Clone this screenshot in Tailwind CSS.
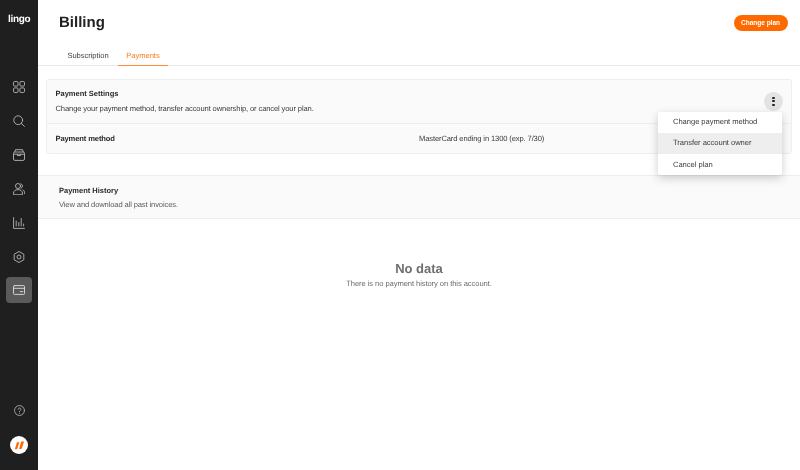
<!DOCTYPE html>
<html>
<head>
<meta charset="utf-8">
<script src="https://cdn.jsdelivr.net/npm/@tailwindcss/browser@4"></script>
</head>
<body class="font-['Liberation_Sans',sans-serif] bg-white [text-rendering:geometricPrecision]">
<div class="flex h-[470px] w-[800px] overflow-hidden">
  <aside class="w-[38px] shrink-0 bg-[#1f1f1f] flex flex-col items-center text-[#b8b8b8]">
    <div class="h-[37px] pt-[1px] flex items-center text-white text-[10px] font-bold tracking-[-0.3px] [will-change:transform]">lingo</div>
    <nav class="mt-[37px] flex flex-col items-center gap-[8px]">
      <div class="w-[26px] h-[26px] flex items-center justify-center">
        <svg class="w-[12px] h-[12px]" viewBox="0 0 12 12" fill="none" stroke="currentColor" stroke-width="0.9"><rect x=".5" y=".5" width="4.6" height="4.6" rx="1.2"/><rect x="6.9" y=".5" width="4.6" height="4.6" rx="1.2"/><rect x=".5" y="6.9" width="4.6" height="4.6" rx="1.2"/><rect x="6.9" y="6.9" width="4.6" height="4.6" rx="1.2"/></svg>
      </div>
      <div class="w-[26px] h-[26px] flex items-center justify-center">
        <svg class="w-[12px] h-[12px]" viewBox="0 0 12 12" fill="none" stroke="currentColor" stroke-width="0.9" stroke-linecap="round"><circle cx="5.2" cy="5.2" r="4.4"/><path d="M8.4 8.4 11.4 11.4"/></svg>
      </div>
      <div class="w-[26px] h-[26px] flex items-center justify-center">
        <svg class="w-[12px] h-[12px]" viewBox="0 0 12 12" fill="none" stroke="currentColor" stroke-width="0.9"><rect x=".5" y="3" width="11" height="8.4" rx="1.4"/><path d="M1.8 3 2.4.7h7.2L10.2 3M.5 5.2h11M4.4 5.2v1.3h3.2V5.2"/></svg>
      </div>
      <div class="w-[26px] h-[26px] flex items-center justify-center">
        <svg class="w-[12px] h-[12px]" viewBox="0 0 12 12" fill="none" stroke="currentColor" stroke-width="0.9" stroke-linecap="round"><circle cx="5" cy="3" r="2.5"/><path d="M.6 11.4V10c0-2 1.8-3.4 4.4-3.4S9.4 8 9.4 10v1.4zM8 .8a2.4 2.4 0 0 1 0 4.4M10 6.9c1 .5 1.6 1.5 1.6 2.8v1"/></svg>
      </div>
      <div class="w-[26px] h-[26px] flex items-center justify-center">
        <svg class="w-[12px] h-[12px]" viewBox="0 0 12 12" fill="none" stroke="currentColor" stroke-width="0.9" stroke-linecap="round"><path d="M.6.6v10.8h10.8M3.2 4v5M5.8 5.5V9M8.2 1.5V9M10.6 7v2"/></svg>
      </div>
      <div class="w-[26px] h-[26px] flex items-center justify-center">
        <svg class="w-[12px] h-[12px]" viewBox="0 0 12 12" fill="none" stroke="currentColor" stroke-width="0.9" stroke-linejoin="round"><path d="M6 .5 10.8 3.2v5.6L6 11.5 1.2 8.8V3.2z"/><circle cx="6" cy="6" r="2"/></svg>
      </div>
      <div class="w-[26px] h-[26px] rounded-[4px] bg-[#5a5a5a] flex items-center justify-center text-[#e0e0e0] -mt-[1px]">
        <svg class="w-[12px] h-[12px]" viewBox="0 0 12 12" fill="none" stroke="currentColor" stroke-width="0.9" stroke-linecap="round"><rect x=".5" y="1.6" width="11" height="8.8" rx="1"/><path d="M.5 4.3h11M7.2 7.6h2.6"/></svg>
      </div>
    </nav>
    <div class="mt-auto flex flex-col items-center pb-[16px] gap-[20px]">
      <svg class="w-[11px] h-[11px]" viewBox="0 0 12 12" fill="none" stroke="currentColor" stroke-width="0.9" stroke-linecap="round"><circle cx="6" cy="6" r="5.4"/><path d="M4.5 4.7a1.5 1.5 0 1 1 2.3 1.3c-.5.3-.8.6-.8 1.1M6 8.9v.1"/></svg>
      <div class="w-[18px] h-[18px] rounded-full bg-white flex items-center justify-center">
        <svg class="w-[11px] h-[9px]" viewBox="0 0 11 9" fill="#ff6a00"><path d="M3 1.2h2.4L3.4 7.6a1 1 0 0 1-1 .7H.8zM7.2.6h2.9L7.9 7.2a1 1 0 0 1-1 .7H5.1z"/></svg>
      </div>
    </div>
  </aside>
  <main class="flex-1 min-w-0 flex flex-col [will-change:transform]">
    <header class="h-[46px] pl-[21px] pr-[12.5px] flex items-center justify-between">
      <h1 class="text-[15px] font-bold text-[#222] mt-[1px]">Billing</h1>
      <button class="h-[15.5px] w-[54px] rounded-full bg-[#ff6a00] text-white text-[6.5px] font-bold flex items-center justify-center">Change plan</button>
    </header>
    <div class="h-[20px] pl-[21px] flex border-b border-[#e9e9e9] text-[7.6px] tracking-[-0.05px]">
      <div class="w-[60px] text-[#444] h-[20px] flex items-center justify-center -ml-[1px]">Subscription</div>
      <div class="w-[50px] text-[#ff7a1a] h-[20px] border-b-[1.5px] border-[#ff8a3c] flex items-center justify-center">Payments</div>
    </div>
    <section class="mx-[8px] mt-[12.5px] relative border border-[#eeeeee] rounded-[3px] bg-[#fafafa] text-[#333]">
      <div class="h-[44.5px] pl-[8.5px] pr-[8px] flex items-center justify-between border-b border-[#eeeeee]">
        <div class="pt-[1px]">
          <h2 class="text-[7.5px] font-bold text-[#2a2a2a] leading-[10px]">Payment Settings</h2>
          <p class="text-[7.6px] tracking-[-0.13px] mt-[5px] text-[#3c3c3c] leading-[10px]">Change your payment method, transfer account ownership, or cancel your plan.</p>
        </div>
        <div class="w-[19px] h-[19px] rounded-full bg-[#e3e3e3] flex flex-col items-center justify-center gap-[1.2px]">
          <span class="w-[2.2px] h-[2.2px] rounded-full bg-[#222]"></span>
          <span class="w-[2.2px] h-[2.2px] rounded-full bg-[#222]"></span>
          <span class="w-[2.2px] h-[2.2px] rounded-full bg-[#222]"></span>
        </div>
      </div>
      <div class="h-[29px] pl-[8.5px] flex items-center text-[7.6px] tracking-[-0.13px]">
        <div class="w-[363.5px] font-bold text-[#2a2a2a]">Payment method</div>
        <div class="text-[#3c3c3c]">MasterCard ending in 1300 (exp. 7/30)</div>
      </div>
      <div class="absolute left-[611px] top-[32px] w-[124px] bg-white rounded-[2px] shadow-[0_3px_10px_rgba(0,0,0,0.2)] text-[7.6px] tracking-[-0.05px] text-[#3c3c3c]">
        <div class="h-[21px] px-[15px] flex items-center">Change payment method</div>
        <div class="h-[21px] px-[15px] flex items-center bg-[#eeeeee]">Transfer account owner</div>
        <div class="h-[21.5px] px-[15px] flex items-center">Cancel plan</div>
      </div>
    </section>
    <section class="mt-[21px] h-[44px] pt-[1px] pl-[21px] border-y border-[#eeeeee] bg-[#fafafa] flex flex-col justify-center">
      <h2 class="text-[7.5px] font-bold text-[#2a2a2a] leading-[10px]">Payment History</h2>
      <p class="text-[7.6px] tracking-[-0.13px] mt-[4px] text-[#5c5c5c] leading-[10px]">View and download all past invoices.</p>
    </section>
    <div class="mt-[42px] flex flex-col items-center">
      <h3 class="text-[13px] font-bold text-[#6f6f6f] leading-[16px]">No data</h3>
      <p class="text-[7.6px] tracking-[-0.08px] text-[#6c6c6c] mt-[2px] leading-[10px]">There is no payment history on this account.</p>
    </div>
  </main>
</div>
</body>
</html>
